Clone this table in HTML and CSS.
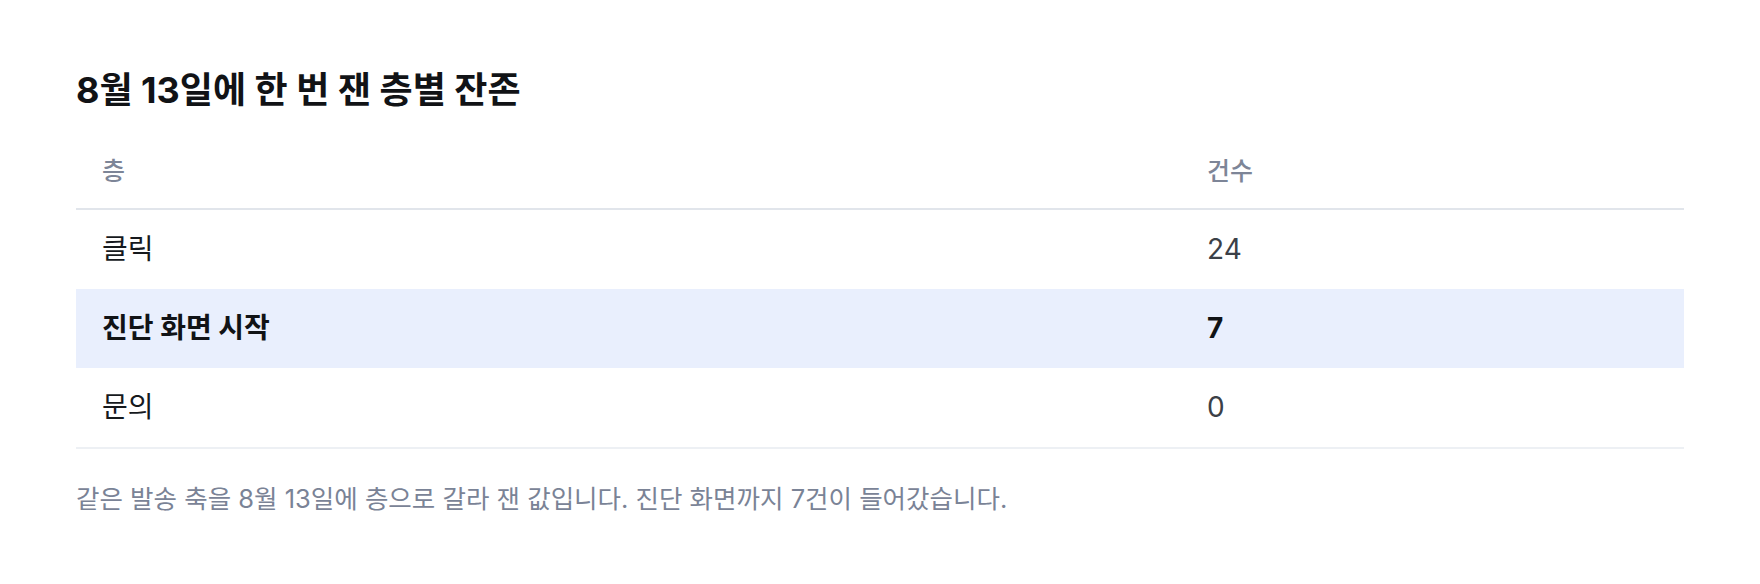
FILE: index.html
```html
<!DOCTYPE html>
<html lang="ko">
<head>
<meta charset="utf-8">
<link rel="stylesheet" href="styles.css">
</head>
<body>
<section class="panel">
  <h2 class="title">8월 13일에 한 번 잰 층별 잔존</h2>
  <table class="layers">
    <colgroup><col class="col-name"><col class="col-count"></colgroup>
    <thead>
      <tr><th>층</th><th>건수</th></tr>
    </thead>
    <tbody>
      <tr><td>클릭</td><td class="num">24</td></tr>
      <tr class="hl"><td>진단 화면 시작</td><td class="num">7</td></tr>
      <tr><td>문의</td><td class="num">0</td></tr>
    </tbody>
  </table>
  <p class="note">같은 발송 축을 8월 13일에 층으로 갈라 잰 값입니다. 진단 화면까지 7건이 들어갔습니다.</p>
</section>
</body>
</html>
```

FILE: styles.css
```css
* { box-sizing: border-box; }
html, body { margin: 0; padding: 0; background: #fff; }
body {
  font-family: Inter, "Noto Sans CJK KR", sans-serif;
  color: #1a1d21;
}
.panel {
  padding: 68px 76px 0;
}
.title {
  margin: 0;
  font-size: 36px;
  line-height: 44px;
  font-weight: 700;
  color: #111316;
}
.layers {
  margin-top: 22px;
  width: 100%;
  border-collapse: collapse;
  table-layout: fixed;
}
.col-name { width: 1105px; }
.layers th {
  text-align: left;
  font-weight: 500;
  font-size: 25px;
  line-height: 32px;
  color: #7d8597;
  padding: 21px 26px;
  border-bottom: 2px solid #e1e5eb;
}
.layers td {
  font-size: 28px;
  line-height: 35px;
  padding: 22px 26px;
  color: #16191d;
}
.layers td.num { color: #3b4047; }
.layers tbody tr:last-child td { border-bottom: 2px solid #edf0f4; }
.layers tr.hl td {
  background: #e9effd;
  font-weight: 700;
  color: #111316;
}
.note {
  margin: 32px 0 0;
  font-size: 25.5px;
  line-height: 36px;
  color: #7a8396;
}
```
